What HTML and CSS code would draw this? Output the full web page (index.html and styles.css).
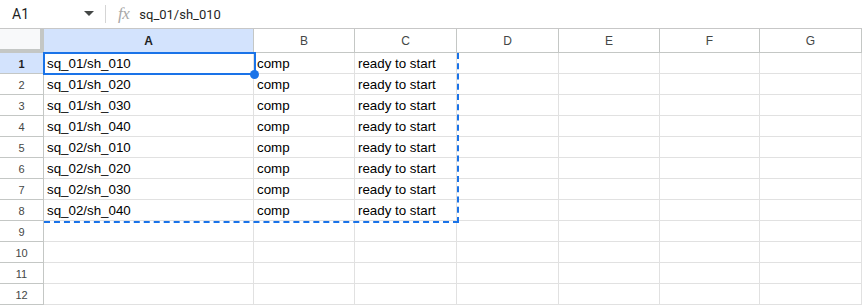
FILE: index.html
```html
<!DOCTYPE html>
<html lang="en">
<head>
    <meta charset="UTF-8">
    <title>Sheet</title>
    <link rel="stylesheet" href="styles.css">
</head>
<body>
    <div class="formula-bar">
        <div class="name-box">A1</div>
        <svg class="caret" width="10" height="6" viewBox="0 0 10 6"><path d="M0 0h10L5 5z" fill="#444746"/></svg>
        <div class="sep"></div>
        <span class="fx">fx</span>
        <div class="formula">sq_01/sh_010</div>
    </div>

    <div class="sheet">
        <div class="grid">
            <div class="corner"></div>
            <div class="col-head active">A</div>
            <div class="col-head">B</div>
            <div class="col-head">C</div>
            <div class="col-head">D</div>
            <div class="col-head">E</div>
            <div class="col-head">F</div>
            <div class="col-head">G</div>
        </div>
        <div class="grid" id="rows"></div>

        <div class="copy-range"></div>
        <div class="selection"></div>
        <div class="handle"></div>
    </div>

    <script>
        var data = [
            ['sq_01/sh_010', 'comp', 'ready to start'],
            ['sq_01/sh_020', 'comp', 'ready to start'],
            ['sq_01/sh_030', 'comp', 'ready to start'],
            ['sq_01/sh_040', 'comp', 'ready to start'],
            ['sq_02/sh_010', 'comp', 'ready to start'],
            ['sq_02/sh_020', 'comp', 'ready to start'],
            ['sq_02/sh_030', 'comp', 'ready to start'],
            ['sq_02/sh_040', 'comp', 'ready to start']
        ];
        var rows = document.getElementById('rows');
        for (var r = 0; r < 12; r++) {
            var num = document.createElement('div');
            num.className = 'row-head' + (r === 0 ? ' active' : '');
            num.textContent = r + 1;
            rows.appendChild(num);
            for (var c = 0; c < 7; c++) {
                var cell = document.createElement('div');
                cell.className = 'cell';
                cell.textContent = (data[r] && data[r][c]) || '';
                rows.appendChild(cell);
            }
        }
    </script>
</body>
</html>
```

FILE: styles.css
```css
body {
    margin: 0;
    font-family: "Liberation Sans", Arial, sans-serif;
    background: #fff;
    color: #1f1f1f;
    overflow: hidden;
}

.formula-bar {
    display: flex;
    align-items: center;
    height: 28px;
    border-bottom: 1px solid #c7c7c7;
    font-family: Roboto, "Liberation Sans", sans-serif;
    font-size: 14px;
}

.name-box {
    width: 72px;
    padding-left: 12px;
    color: #1f1f1f;
}

.sep {
    width: 1px;
    height: 18px;
    background: #d5d5d5;
    margin-left: 11px;
}

.fx {
    font-family: "Liberation Serif", serif;
    font-style: italic;
    font-size: 17px;
    color: #a8a8a8;
    margin-left: 12px;
    letter-spacing: -0.5px;
}

.formula {
    margin-left: 10px;
    font-size: 13px;
}

.sheet {
    position: relative;
}

.grid {
    display: grid;
    grid-template-columns: 44px 210px 101px 102px 102px 101px 100px 102px;
}

.corner {
    height: 24px;
    box-sizing: border-box;
    background: #f8f9fa;
    border-right: 4px solid #c4c7c5;
    border-bottom: 4px solid #c4c7c5;
}

.col-head {
    height: 24px;
    box-sizing: border-box;
    border-right: 1px solid #c4c7c5;
    border-bottom: 1px solid #c4c7c5;
    display: flex;
    align-items: center;
    justify-content: center;
    font-size: 12px;
    color: #444746;
    padding-top: 1px;
}

.col-head.active {
    background: #d3e3fd;
    font-weight: bold;
    color: #1f1f1f;
}

.row-head {
    height: 21px;
    box-sizing: border-box;
    border-right: 1px solid #c4c7c5;
    border-bottom: 1px solid #c4c7c5;
    display: flex;
    align-items: center;
    justify-content: center;
    font-size: 11px;
    color: #444746;
    padding-top: 1px;
}

.row-head.active {
    background: #d3e3fd;
    font-weight: bold;
    color: #1f1f1f;
}

.cell {
    height: 21px;
    box-sizing: border-box;
    border-right: 1px solid #e1e1e1;
    border-bottom: 1px solid #e1e1e1;
    font-size: 13.33px;
    line-height: 21px;
    padding-left: 3px;
    white-space: nowrap;
    overflow: hidden;
    color: #000;
}

.selection {
    position: absolute;
    left: 43px;
    top: 23px;
    width: 213px;
    height: 23px;
    border: 2px solid #1a73e8;
    box-sizing: border-box;
}

.copy-range {
    position: absolute;
    left: 44px;
    top: 24px;
    width: 415px;
    height: 170px;
    box-sizing: border-box;
    border-right: 2px dashed #1a73e8;
    border-bottom: 2px dashed #1a73e8;
}

.handle {
    position: absolute;
    left: 250px;
    top: 41px;
    width: 9px;
    height: 9px;
    border-radius: 50%;
    background: #1a73e8;
}
```
